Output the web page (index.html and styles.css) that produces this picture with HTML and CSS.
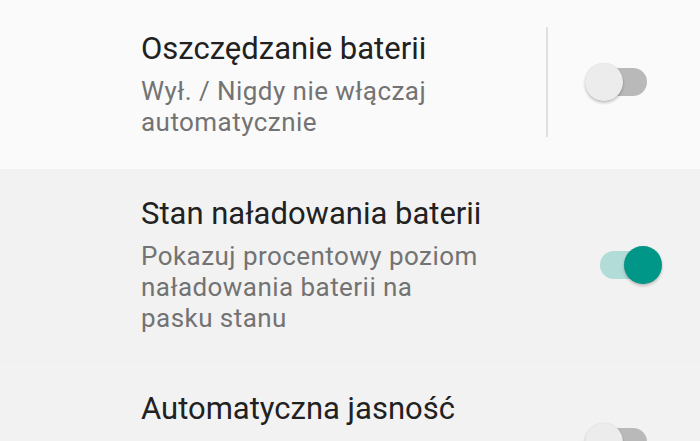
FILE: index.html
```html
<!DOCTYPE html>
<html lang="pl">
<head>
<meta charset="utf-8">
<link rel="stylesheet" href="styles.css">
</head>
<body>
<div class="list">
  <div class="row row-master">
    <div class="text">
      <div class="title">Oszczędzanie baterii</div>
      <div class="summary">Wył. / Nigdy nie włączaj automatycznie</div>
    </div>
    <div class="widget widget-wide">
      <div class="divider"></div>
      <div class="switch"><div class="track"></div><div class="thumb"></div></div>
    </div>
  </div>
  <div class="row row-plain">
    <div class="text">
      <div class="title">Stan naładowania baterii</div>
      <div class="summary">Pokazuj procentowy poziom naładowania baterii na pasku stanu</div>
    </div>
    <div class="widget widget-narrow">
      <div class="switch on"><div class="track"></div><div class="thumb"></div></div>
    </div>
  </div>
  <div class="row row-last">
    <div class="text">
      <div class="title">Automatyczna jasność</div>
    </div>
    <div class="widget widget-wide">
      <div class="switch"><div class="track"></div><div class="thumb"></div></div>
    </div>
  </div>
</div>
</body>
</html>
```

FILE: styles.css
```css
* { box-sizing: border-box; }
html, body {
  margin: 0;
  padding: 0;
  background: #f2f2f2;
  font-family: Roboto, "Noto Sans", sans-serif;
  overflow: hidden;
}
.list {
  display: flex;
  flex-direction: column;
}
.row {
  display: flex;
  justify-content: space-between;
  align-items: center;
  padding-left: 141px;
}
.row-master {
  background: #fafafa;
  height: 169px;
}
.row-plain {
  background: #f2f2f2;
  height: 193px;
  border-bottom: 1px solid #efefef;
}
.row-last {
  background: #f2f2f2;
  height: 160px;
  align-items: stretch;
}
.row-last .text { padding-top: 29px; }
.row-last .widget { align-self: center; }
.text {
  width: 343px;
  display: flex;
  flex-direction: column;
  gap: 9px;
}
.title {
  font-size: 31px;
  line-height: 36px;
  color: #212121;
}
.summary {
  font-size: 26px;
  line-height: 31px;
  letter-spacing: 0.45px;
  color: #737373;
}
.widget {
  display: flex;
  align-items: center;
}
.widget-wide { margin-right: 50px; }
.row-master .widget { margin-top: -5px; }
.widget-narrow { margin-right: 38px; }
.divider {
  width: 2px;
  height: 110px;
  background: #e0e0e0;
  margin-right: 37px;
}
.row-last .widget-wide { padding-left: 39px; }
.switch {
  position: relative;
  width: 65px;
  height: 38px;
}
.track {
  position: absolute;
  left: 3px;
  top: 5px;
  width: 59px;
  height: 28px;
  border-radius: 14px;
  background: #b9b9b9;
}
.thumb {
  position: absolute;
  left: 0;
  top: 0;
  width: 38px;
  height: 38px;
  border-radius: 50%;
  background: #ececec;
  box-shadow: 0 2px 3px rgba(0,0,0,0.22), 0 0 1px rgba(0,0,0,0.12);
}
.switch.on .track { background: #b2dcd8; }
.switch.on .thumb {
  left: 27px;
  background: #009688;
}
```
